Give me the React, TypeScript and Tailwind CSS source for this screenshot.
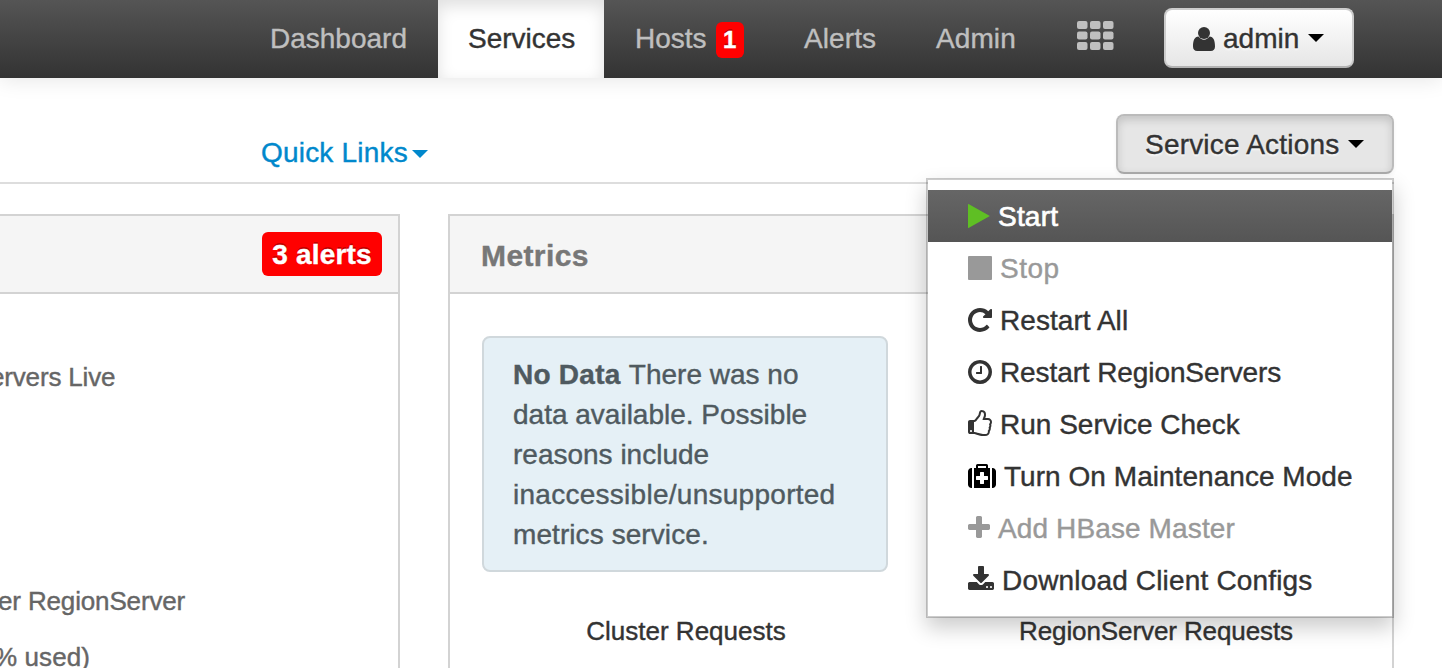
import type { ReactNode } from "react";

type GlyphProps = { x: number; w: number; d: string; className?: string };

/* Icons share a 28px em square of 1792 units, cropped to each glyph's advance. */
function Glyph({ x, w, d, className = "" }: GlyphProps) {
  return (
    <svg
      className={`-mt-px shrink-0 fill-current ${className}`}
      viewBox={`${x} 0 ${w} 1792`}
      width={w / 64}
      height={28}
      aria-hidden="true"
    >
      <path d={d} />
    </svg>
  );
}

const PLAY = "M192 152q0-37 33-18l1340 742q28 20 0 38l-1340 744q-33 17-33-20z";
const STOP =
  "M1664 192v1408q0 64-64 64h-1408q-64 0-64-64v-1408q0-64 64-64h1408q64 0 64 64z";
const REPEAT =
  "M1664 256v448q0 26-19 45t-45 19h-448q-42 0-59-40-17-39 14-69l138-138q-148-137-349-137-104 0-198.500 40.500t-163.500 109.500-109.500 163.500-40.500 198.500 40.500 198.500 109.500 163.500 163.500 109.500 198.500 40.500q119 0 225-52t179-147q7-10 23-12 15 0 25 9l137 138q9 8 9.500 20.500t-7.500 22.500q-109 132-264 204.500t-327 72.500q-156 0-298-61t-245-164-164-245-61-298 61-298 164-245 245-164 298-61q147 0 284.500 55.500t244.500 156.500l130-129q29-31 70-14 39 17 39 59z";
const CLOCK =
  "M1024 544v448q0 14-9 23t-23 9h-320q-14 0-23-9t-9-23v-64q0-14 9-23t23-9h224v-352q0-14 9-23t23-9h64q14 0 23 9t9 23zm416 352q0-148-73-273t-198-198-273-73-273 73-198 198-73 273 73 273 198 198 273 73 273-73 198-198 73-273zm224 0q0 209-103 385.500t-279.500 279.500-385.500 103-385.500-103-279.500-279.500-103-385.500 103-385.500 279.500-279.500 385.500-103 385.500 103 279.500 279.500 103 385.500z";
const THUMB =
  "M384 1344q0-26-19-45t-45-19-45 19-19 45 19 45 45 19 45-19 19-45zm1152-576q0-51-39-89.500t-89-38.500h-352q0-58 48-159.500t48-160.500q0-98-32-145t-128-47q-26 26-38 85t-30.500 125.500-59.500 109.500q-22 23-77 91-4 5-23 30t-31.500 41-34.500 42.500-40 44-38.500 35.500-40 27-35.500 9h-32v640h32q13 0 31.500 3t33 6.500 38 11 35 11.500 35.500 12.500 29 10.500q211 73 342 73h121q192 0 192-167 0-26-5-56 30-16 47.500-52.500t17.500-73.500-18-69q53-50 53-119 0-25-10-55.500t-25-47.500q32-1 53.500-47t21.500-81zm128-1q0 89-49 163 9 33 9 69 0 77-38 144 3 21 3 43 0 101-60 178 1 139-85 219.500t-227 80.500h-129q-96 0-189.500-22.500t-216.500-65.500q-116-40-138-40h-288q-53 0-90.500-37.500t-37.500-90.500v-640q0-53 37.500-90.500t90.500-37.500h274q36-24 137-155 58-75 107-128 24-25 35.500-85.500t30.500-126.500 62-108q39-37 90-37 84 0 151 32.500t102 101.500 35 186q0 93-48 192h176q104 0 180 76t76 179z";
const MEDKIT =
  "M1280 1120v-192q0-14-9-23t-23-9h-224v-224q0-14-9-23t-23-9h-192q-14 0-23 9t-9 23v224h-224q-14 0-23 9t-9 23v192q0 14 9 23t23 9h224v224q0 14 9 23t23 9h192q14 0 23-9t9-23v-224h224q14 0 23-9t9-23zm-640-736h512v-128h-512v128zm-384 0v1280h-32q-92 0-158-66t-66-158v-832q0-92 66-158t158-66h32zm1152 0v1280h-1024v-1280h128v-160q0-40 28-68t68-28h576q40 0 68 28t28 68v160h128zm384 224v832q0 92-66 158t-158 66h-32v-1280h32q92 0 158 66t66 158z";
const PLUS =
  "M1600 736v192q0 40-28 68t-68 28h-416v416q0 40-28 68t-68 28h-192q-40 0-68-28t-28-68v-416h-416q-40 0-68-28t-28-68v-192q0-40 28-68t68-28h416v-416q0-40 28-68t68-28h192q40 0 68 28t28 68v416h416q40 0 68 28t28 68z";
const DOWNLOAD =
  "M1344 1344q0-26-19-45t-45-19-45 19-19 45 19 45 45 19 45-19 19-45zm256 0q0-26-19-45t-45-19-45 19-19 45 19 45 45 19 45-19 19-45zm128-224v320q0 40-28 68t-68 28h-1472q-40 0-68-28t-28-68v-320q0-40 28-68t68-28h465l135 136q58 56 136 56t136-56l136-136h464q40 0 68 28t28 68zm-325-569q17 41-14 70l-448 448q-18 19-45 19t-45-19l-448-448q-31-29-14-70 17-39 59-39h256v-448q0-26 19-45t45-19h256q26 0 45 19t19 45v448h256q42 0 59 39z";

function UserIcon() {
  return (
    <svg className="shrink-0 fill-current" width="22" height="24" viewBox="0 0 22 24" aria-hidden="true">
      <circle cx="11" cy="6" r="6" />
      <path d="M5.500 9.600C1.500 10 0 13.500 0 19.500 0 22.300 1.600 24 4.200 24h13.600c2.600 0 4.200-1.700 4.200-4.500 0-6-1.500-9.500-5.500-9.900C15 11.600 13.200 12.700 11 12.700S7 11.600 5.500 9.600z" />
    </svg>
  );
}

function Caret({ className = "" }: { className?: string }) {
  return (
    <svg className={`shrink-0 fill-current ${className}`} width="16" height="8" viewBox="0 0 16 8" aria-hidden="true">
      <path d="M0 0h16L8 8z" />
    </svg>
  );
}

function GridIcon() {
  return (
    <svg className="fill-[#bfbfbf]" width="37" height="30" viewBox="0 0 37 30" aria-hidden="true">
      {[0, 10.5, 21].map((y) =>
        [0, 13, 26].map((x) => <rect key={`${x}-${y}`} x={x} y={y} width="10.500" height="8" rx="2" />),
      )}
    </svg>
  );
}

type Item = { label: string; icon: ReactNode; tone: string; track: string };

const items: Item[] = [
  {
    label: "Start",
    icon: <Glyph x={192} w={1408} d={PLAY} className="text-[#5fbf24]" />,
    tone: "bg-linear-to-b from-[#666666] to-[#555555] text-white",
    track: "tracking-[0.2px] [-webkit-text-stroke:0.7px]",
  },
  { label: "Stop", icon: <Glyph x={128} w={1536} d={STOP} />, tone: "text-[#999999]", track: "tracking-[0.500px]" },
  { label: "Restart All", icon: <Glyph x={128} w={1536} d={REPEAT} />, tone: "text-[#333333]", track: "tracking-[0.050px]" },
  {
    label: "Restart RegionServers",
    icon: <Glyph x={128} w={1536} d={CLOCK} />,
    tone: "text-[#333333]",
    track: "tracking-[-0.100px]",
  },
  { label: "Run Service Check", icon: <Glyph x={128} w={1536} d={THUMB} />, tone: "text-[#333333]", track: "tracking-[0px]" },
  {
    label: "Turn On Maintenance Mode",
    icon: <Glyph x={0} w={1792} d={MEDKIT} className="text-black" />,
    tone: "text-[#333333]",
    track: "tracking-[0.040px]",
  },
  { label: "Add HBase Master", icon: <Glyph x={192} w={1408} d={PLUS} />, tone: "text-[#999999]", track: "tracking-[0.120px]" },
  {
    label: "Download Client Configs",
    icon: <Glyph x={64} w={1664} d={DOWNLOAD} />,
    tone: "text-[#333333]",
    track: "tracking-[0.170px]",
  },
];

function ServiceMenu() {
  return (
    <ul className="absolute top-[64px] right-0 z-10 w-[468px] border-2 border-black/20 bg-white bg-clip-padding py-[10px] shadow-[0_10px_20px_rgba(0,0,0,0.2)]">
      {items.map((item) => (
        <li key={item.label} className={`flex h-[52px] items-center gap-2 pt-px pl-10 ${item.tone}`}>
          {item.icon}
          <span className={item.track}>{item.label}</span>
        </li>
      ))}
    </ul>
  );
}

function NavBar() {
  return (
    <nav className="flex h-[78px] bg-linear-to-b from-[#555555] to-[#333333] text-[#bfbfbf] shadow-[0_2px_20px_rgba(0,0,0,0.1)]">
      <a className="ml-[240px] flex w-[198px] items-center pl-[30px]">
        <span>Dashboard</span>
      </a>
      <a className="flex w-[166px] items-center bg-white pl-[30px] text-[#333333] shadow-[inset_0_6px_16px_rgba(0,0,0,0.125)]">
        <span>Services</span>
      </a>
      <a className="flex w-[170px] items-center pl-[31px]">
        <span>Hosts</span>
        <span className="mt-px ml-[9px] flex h-9 w-7 items-center justify-center rounded-md bg-[#ff0000] text-[24px] font-bold text-white text-shadow-[0_-2px_0_rgba(0,0,0,0.25)]">
          1
        </span>
      </a>
      <a className="flex w-[132px] items-center pl-[30px]">
        <span className="tracking-[0.100px]">Alerts</span>
      </a>
      <a className="flex w-[171px] items-center pl-[30px]">
        <span className="tracking-[0.100px]">Admin</span>
      </a>
      <a className="flex w-[87px] items-center pb-[6px]">
        <GridIcon />
      </a>
      <button className="mt-2 flex h-[60px] w-[190px] items-center rounded-lg border-2 border-[#cccccc] border-b-[#b3b3b3] bg-linear-to-b from-white to-[#e6e6e6] pt-px pl-[27px] text-[#333333] text-shadow-[0_2px_2px_rgba(255,255,255,0.75)]">
        <UserIcon />
        <span className="ml-2">admin</span>
        <Caret className="-mt-px ml-[9px] text-black" />
      </button>
    </nav>
  );
}

function ActionBar() {
  return (
    <div className="relative mr-12 flex h-[106px] justify-between border-b-2 border-[#dddddd]">
      <a className="mt-[55px] flex h-10 items-center pl-[261px] text-[#0088cc]">
        <span className="tracking-[0.200px]">Quick Links</span>
        <Caret className="mt-px ml-1" />
      </a>
      <div className="relative mt-9 h-[60px]">
        <button className="flex h-[60px] w-[278px] items-center rounded-lg border-2 border-[#bbbbbb] border-b-[#aaaaaa] bg-[#e6e6e6] pt-px pl-[27px] text-[#333333] shadow-[inset_0_4px_8px_rgba(0,0,0,0.15),0_2px_4px_rgba(0,0,0,0.05)] text-shadow-[0_2px_2px_rgba(255,255,255,0.75)]">
          <span className="tracking-[0.200px]">Service Actions</span>
          <Caret className="-mt-px ml-[9px] text-black" />
        </button>
        <ServiceMenu />
      </div>
    </div>
  );
}

function SummaryPanel() {
  return (
    <section className="h-[500px] w-[400px] overflow-hidden border-t-2 border-r-2 border-[#d3d3d3]">
      <header className="flex h-[78px] justify-end border-b-2 border-[#d3d3d3] bg-[#f5f5f5] pt-4 pr-4">
        <span className="flex h-11 w-[120px] items-center justify-center rounded-md bg-[#ff0000] pt-px font-bold tracking-[0.200px] text-white text-shadow-[0_-2px_0_rgba(0,0,0,0.25)]">
          3 alerts
        </span>
      </header>
      <div className="text-[26px] leading-10 text-[#666666]">
        <p className="mt-[63px] -ml-[10px] tracking-[-0.170px]">ervers Live</p>
        <p className="mt-[184px] -ml-[2px] tracking-[-0.150px]">er RegionServer</p>
        <p className="mt-4 -ml-[6px] tracking-[0.100px]">% used)</p>
      </div>
    </section>
  );
}

function MetricsPanel() {
  return (
    <section className="h-[500px] w-[946px] border-2 border-[#d3d3d3]">
      <header className="flex h-[78px] items-center border-b-2 border-[#d3d3d3] bg-[#f5f5f5] pt-[3px] pl-[31px] text-[30px] font-bold tracking-[0.400px] text-[#777777]">
        Metrics
      </header>
      <div className="mt-[42px] flex gap-[65px] pl-8">
        <div className="w-[406px]">
          <div className="h-[236px] rounded-lg border-2 border-[#d0d8dc] bg-[#e5f0f6] px-[29px] pt-[17px] leading-10 whitespace-nowrap text-[#4f5a60]">
            <div>
              <strong className="mr-px tracking-[0.250px]">No Data</strong> There was no
            </div>
            <div>data available. Possible</div>
            <div>reasons include</div>
            <div className="tracking-[0.270px]">inaccessible/unsupported</div>
            <div className="tracking-[0.080px]">metrics service.</div>
          </div>
          <div className="mt-[39px] pl-[2px] text-center text-[26px] leading-10 text-[#333333]">Cluster Requests</div>
        </div>
        <div className="flex w-[406px] flex-col justify-end">
          <div className="text-center text-[26px] leading-10 tracking-[-0.100px] text-[#333333]">
            RegionServer Requests
          </div>
        </div>
      </div>
    </section>
  );
}

export default function App() {
  return (
    <div className="h-[668px] w-[1442px] overflow-hidden bg-white font-['Liberation_Sans',Arial,sans-serif] text-[28px] leading-10 whitespace-nowrap antialiased [-webkit-text-stroke:0.4px]">
      <NavBar />
      <ActionBar />
      <main className="mt-[30px] flex gap-12">
        <SummaryPanel />
        <MetricsPanel />
      </main>
    </div>
  );
}
